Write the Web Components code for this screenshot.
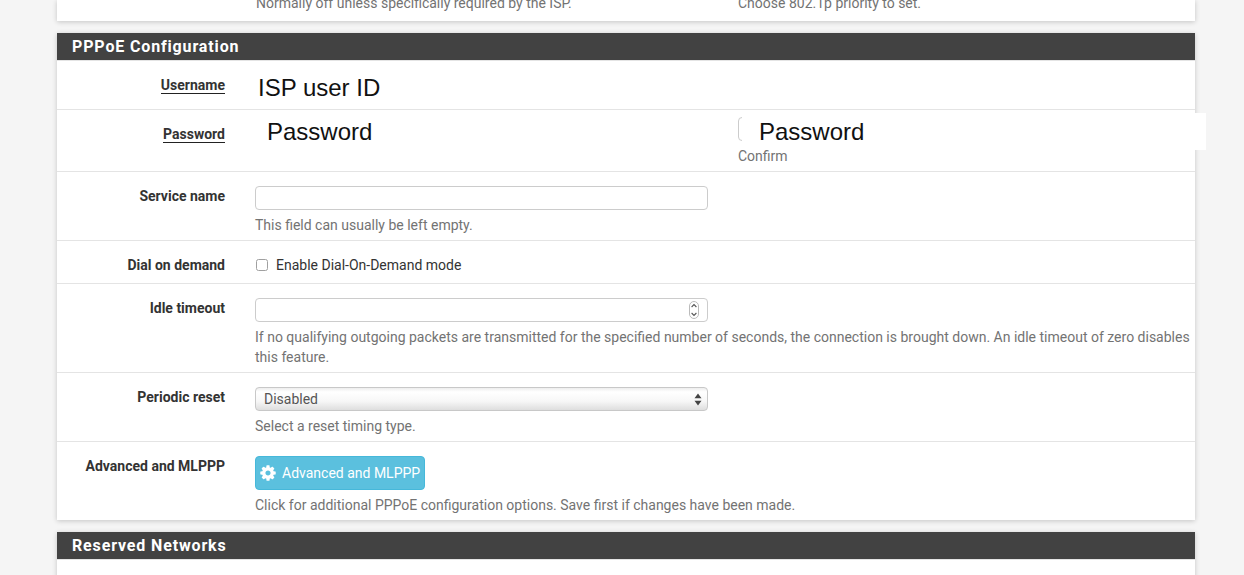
<!DOCTYPE html>
<html lang="en"><head><meta charset="utf-8"><title>PPPoE Configuration</title>
<style>
html,body{margin:0;height:575px;overflow:hidden;background:#f5f5f5}
body{font:14px/20px Roboto,"Liberation Sans",sans-serif;color:#333;display:flex;flex-direction:column;gap:12px;padding:0 49px 0 57px;box-sizing:border-box}
</style></head><body>
<x-cut-panel>
  <x-help>Normally off unless specifically required by the ISP.</x-help>
  <x-help>Choose 802.1p priority to set.</x-help>
</x-cut-panel>
<x-panel title="PPPoE Configuration">
  <x-row label="Username" link><x-masked x="3">ISP user ID</x-masked></x-row>
  <x-row label="Password" link tall>
    <x-pair>
      <x-masked x="12" y="-6">Password</x-masked>
      <div>
        <x-confirm>Password</x-confirm>
        <x-help>Confirm</x-help>
      </div>
    </x-pair>
  </x-row>
  <x-row label="Service name"><x-field></x-field><x-help>This field can usually be left empty.</x-help></x-row>
  <x-row label="Dial on demand" short><x-check>Enable Dial-On-Demand mode</x-check></x-row>
  <x-row label="Idle timeout"><x-field spin></x-field><x-help>If no qualifying outgoing packets are transmitted for the specified number of seconds, the connection is brought down. An idle timeout of zero disables this feature.</x-help></x-row>
  <x-row label="Periodic reset"><x-drop>Disabled</x-drop><x-help>Select a reset timing type.</x-help></x-row>
  <x-row label="Advanced and MLPPP" last><x-cog-button>Advanced and MLPPP</x-cog-button><x-help>Click for additional PPPoE configuration options. Save first if changes have been made.</x-help></x-row>
</x-panel>
<x-panel title="Reserved Networks"><x-row label="" last></x-row></x-panel>
<script>
function def(name,css,html,init){
  customElements.define(name,class extends HTMLElement{
    constructor(){super();const r=this.attachShadow({mode:'open'});
      r.innerHTML='<style>'+css+'</style>'+html;}
    connectedCallback(){ if(init)init(this); }
  });
}
const SHADOW='box-shadow:0 1px 5px rgba(0,0,0,.2);';
def('x-panel',`:host{display:block;background:#fff;flex:none;${SHADOW}}
 h2{margin:0;height:27px;border-bottom:1px solid #e4e4e4;background:#424242;background-clip:padding-box;color:#fff;font:700 16px/27px Roboto,"Liberation Sans",sans-serif;letter-spacing:.85px;padding:0 15px}`,
 `<h2></h2><slot></slot>`,el=>{el.shadowRoot.querySelector('h2').textContent=el.getAttribute('title')});
def('x-cut-panel',`:host{display:grid;grid-template-columns:482px 1fr;grid-template-rows:13px;align-items:end;height:20.5px;padding:0 0 7.5px 199px;box-sizing:border-box;background:#fff;flex:none;${SHADOW}}`,`<slot></slot>`);
def('x-row',`:host{display:grid;grid-template-columns:168px 1fr;column-gap:30px;border-bottom:1px solid #e4e4e4;min-height:42px}
 :host([last]){border-bottom:0}
 .l{padding-top:14px;text-align:right;font-weight:700;color:#333}
 :host([link]) .t{border-bottom:1px solid #222;color:#333}
 .c{padding:14px 0 5px;min-width:0}
 :host([link]) .c{padding:13px 0 7px}
 :host([tall]) .c{padding:7px 0 5px}
 :host([short]) .c{padding:14px 0 8px}`,
 `<div class="l"><span class="t"></span></div><div class="c"><slot></slot></div>`,
 el=>{el.shadowRoot.querySelector('.t').textContent=el.getAttribute('label')});
def('x-help',`:host{display:block;color:#737373;margin-top:5px;line-height:20px}`,`<slot></slot>`);
def('x-masked',`:host{display:block;font:24px/28px "Liberation Sans",Arial,sans-serif;color:#111}`,`<div><slot></slot></div>`,el=>{
  const d=el.shadowRoot.querySelector('div');
  d.style.paddingLeft=(el.getAttribute('x')||0)+'px';
  if(el.getAttribute('y'))d.style.marginTop=(+el.getAttribute('y')+7)+'px';
 });
def('x-pair',`:host{display:grid;grid-template-columns:483px 1fr}`,`<slot></slot>`);
def('x-confirm',`:host{display:block;position:relative;height:24px;box-sizing:border-box;border:1px solid #ccc;border-radius:4px}
 .patch{position:absolute;left:3px;top:-5px;right:-12px;height:37px;background:#fff;font:24px/37px "Liberation Sans",Arial,sans-serif;color:#111;padding-left:17px;box-sizing:border-box}`,
 `<div class="patch"><slot></slot></div>`);
def('x-field',`:host{display:block;position:relative;width:453px;height:24px}
 input{display:block;width:100%;height:24px;box-sizing:border-box;border:1px solid #ccc;border-radius:4px;background:#fff;margin:0;padding:0 8px;font:inherit;outline:0}
 svg{position:absolute;left:434px;top:3px;display:none}
 :host([spin]) svg{display:block}`,
 `<input type="text" aria-label="value"><svg width="10" height="18" viewBox="0 0 10 18"><rect x=".5" y=".5" width="9" height="17" rx="4.5" fill="#fff" stroke="#bbb"/><path d="M2.6 6 5 3.6 7.4 6M2.6 12 5 14.4 7.4 12" fill="none" stroke="#555" stroke-width="1.1"/></svg>`);
def('x-check',`:host{display:flex;align-items:center;height:20px}
 i{display:block;width:12px;height:12px;box-sizing:border-box;border:1px solid #a0a0a0;border-radius:2.5px;background:#fff;margin:0 8px 0 1px}`,
 `<i></i><slot></slot>`);
def('x-drop',`:host{display:flex;align-items:center;position:relative;width:453px;height:24px;box-sizing:border-box;border:1px solid #c8c8c8;border-radius:4px;padding-left:8px;background:linear-gradient(#ededed 0,#fff 18%,#f7f7f7 60%,#dedede 100%);color:#555}
 svg{position:absolute;right:5px;top:5px}`,
 `<slot></slot><svg width="8" height="13" viewBox="0 0 8 13"><path d="M4 .5 7.5 5.3H.5zM4 12.500 .5 7.700h7z" fill="#444"/></svg>`);
def('x-cog-button',`:host{display:inline-flex;vertical-align:top;align-items:center;height:34px;width:170px;box-sizing:border-box;background:#5bc0de;border:1px solid #46b8da;border-radius:4px;color:#fff;padding-left:3px;gap:5px}
 svg{width:18px;height:18px;flex:none}
 span{white-space:nowrap}`,
 `<svg viewBox="0 0 1792 1792"><path fill="#fff" d="M1152 896q0-106-75-181t-181-75-181 75-75 181 75 181 181 75 181-75 75-181zm512-109v222q0 12-8 23t-20 13l-185 28q-19 54-39 91 35 50 107 138 10 12 10 25t-9 23q-27 37-99 108t-94 71q-12 0-26-9l-138-108q-44 23-91 38-16 136-29 186-7 28-36 28h-222q-14 0-24.5-8.5t-11.5-21.5l-28-184q-49-16-90-37l-141 107q-10 9-25 9-14 0-25-11-126-114-165-168-7-10-7-23 0-12 8-23 15-21 51-66.5t54-70.5q-27-50-41-99l-183-27q-13-2-21-12.5t-8-23.5v-222q0-12 8-23t19-13l186-28q14-46 39-92-40-57-107-138-10-12-10-24 0-10 9-23 26-36 98.5-107.5t94.5-71.5q13 0 26 10l138 107q44-23 91-38 16-136 29-186 7-28 36-28h222q14 0 24.5 8.5t11.5 21.5l28 184q49 16 90 37l142-107q9-9 24-9 13 0 25 10 129 119 165 170 7 8 7 22 0 12-8 23-15 21-51 66.5t-54 70.5q26 50 41 98l183 28q13 2 21 12.5t8 23.5z"/></svg><span><slot></slot></span>`);
</script>
</body></html>
